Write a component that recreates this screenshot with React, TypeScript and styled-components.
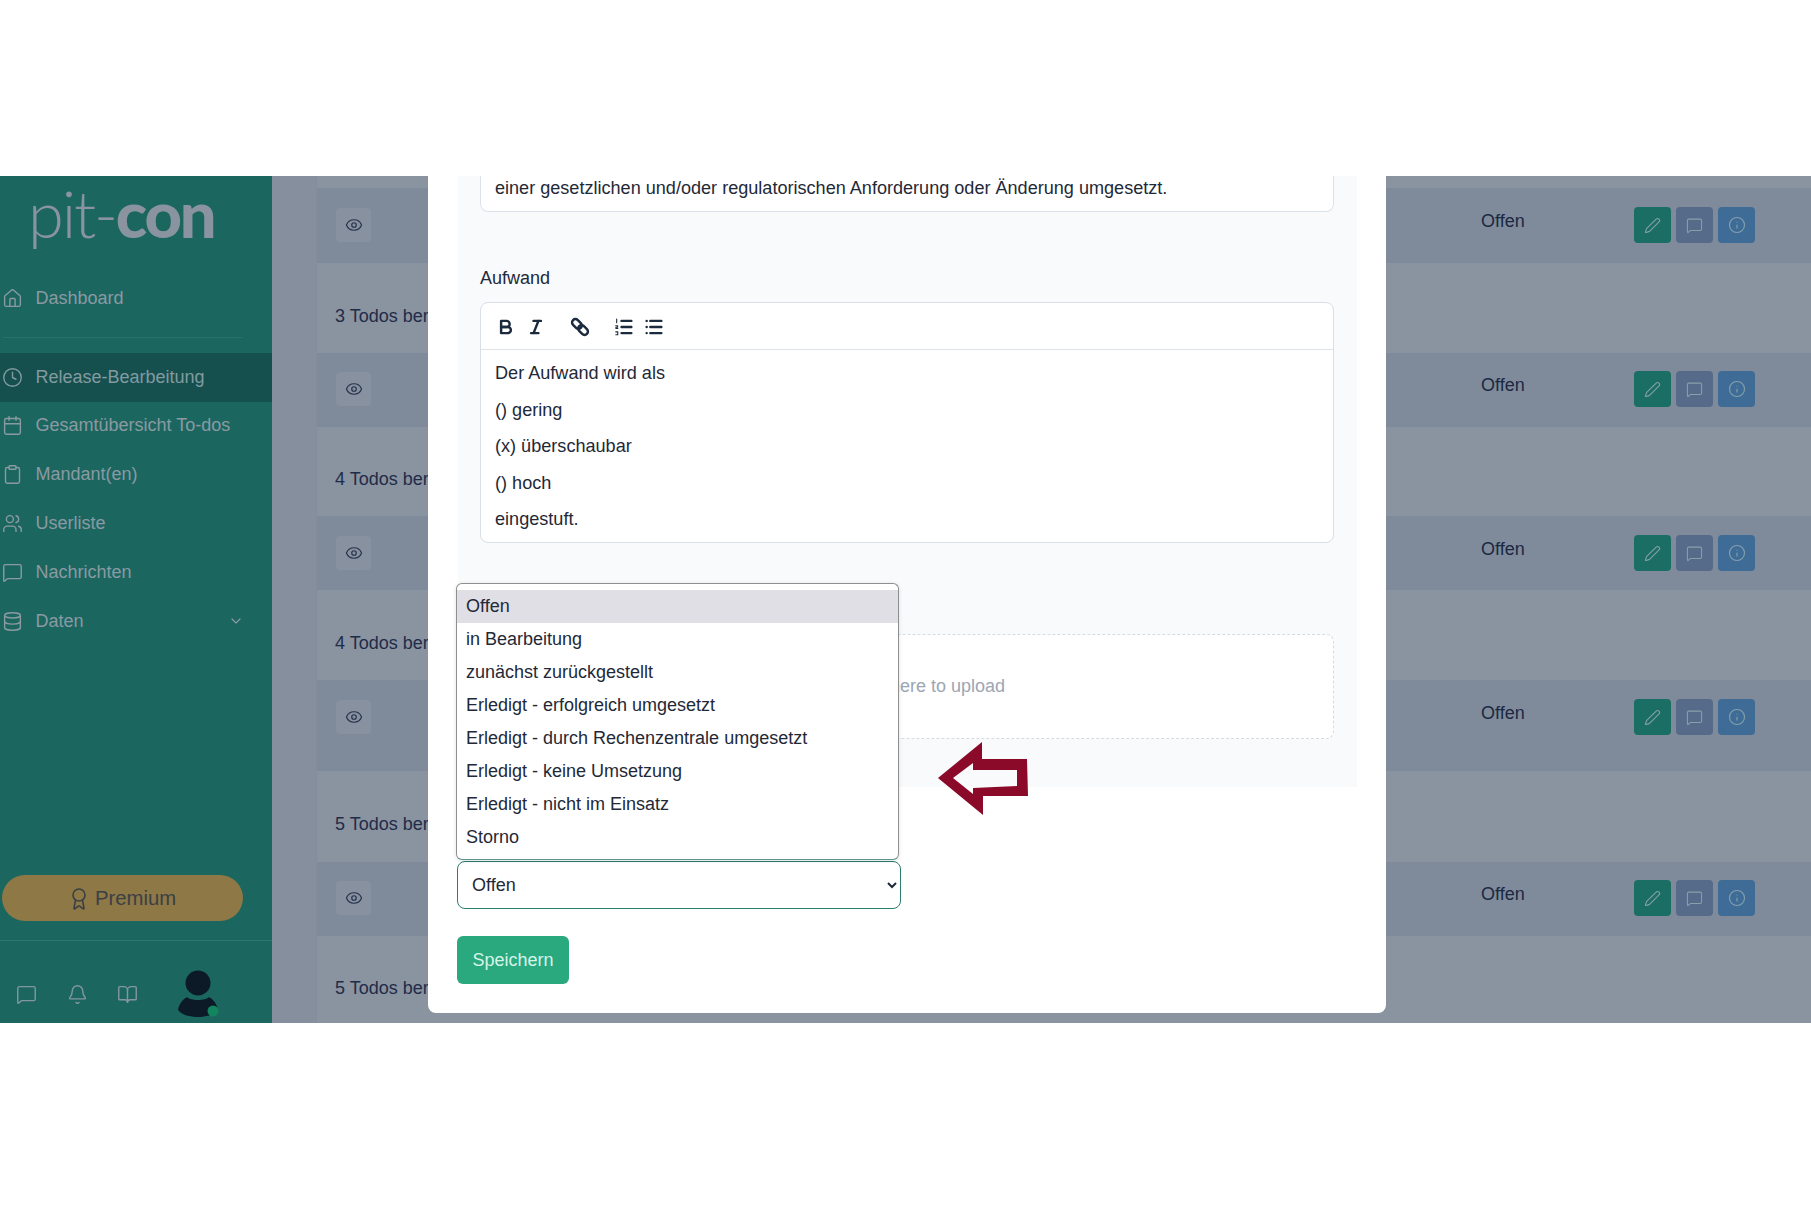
import React from "react";
import styled, { createGlobalStyle } from "styled-components";
import { House, Clock, Calendar, Clipboard, Users, MessageSquare, Database, ChevronDown, Award, Bell, BookOpen, Eye, Pen, Info } from "lucide-react";

const Global = createGlobalStyle`
  html, body { margin: 0; padding: 0; background: #fff; }
  body { font-family: "Liberation Sans", Arial, sans-serif; font-size: 18px; color: #1f2937; overflow: hidden; }
  * { box-sizing: border-box; }
`;

const Page = styled.div`
  height: 1207px;
  padding-top: 176px;
`;
const Shell = styled.div`
  position: relative;
  height: 847px;
  display: flex;
  background: #868f9d;
`;
const Sidebar = styled.aside`
  width: 272px;
  flex: none;
  background: #1c6660;
  display: flex;
  flex-direction: column;
  color: #8a9aa2;
`;
const Logo = styled.div`
  height: 86px;
  padding: 0 0 0 28px;
  font-family: Lato, sans-serif;
  font-size: 65px;
  line-height: 74px;
  letter-spacing: -2.2px;
  color: #8a94a1;
  font-weight: 300;
  white-space: nowrap;
  b { font-weight: 900; }
`;
const NavItem = styled.div<{ $active?: boolean; $first?: boolean }>`
  height: 48.8px;
  margin-top: ${(p) => (p.$first ? 12 : 0)}px;
  display: flex;
  align-items: center;
  gap: 13px;
  padding: 0 28px 0 1.5px;
  background: ${(p) => (p.$active ? "#15504f" : "transparent")};
  color: ${(p) => (p.$active ? "#829aa0" : "#8a9aa2")};
  svg { flex: none; }
`;
const NavLabel = styled.span`
  flex: 1;
`;
const NavDivider = styled.div`
  height: 1px;
  margin: 14px 29px 15px 3px;
  background: #2a716c;
`;
const Spacer = styled.div`
  flex: 1;
`;
const PremiumBtn = styled.div`
  height: 46px;
  margin: 0 29px 19px 2px;
  padding: 1px 2px 0 0;
  border-radius: 23px;
  background: #8e7845;
  color: #3a4045;
  display: flex;
  align-items: center;
  justify-content: center;
  gap: 4px;
  font-size: 20.3px;
`;
const SideFooter = styled.div`
  height: 83px;
  border-top: 1px solid #2f7570;
  display: flex;
  align-items: flex-start;
  padding: 43px 0 0 16px;
  gap: 29.5px;
  color: #83979f;
`;
const FootIcon = styled.span`
  display: flex;
  width: 21px;
  height: 21px;
`;
const AvatarWrap = styled.div`
  margin: -14px 0 0 8px;
  width: 44px;
  height: 56px;
`;
const Main = styled.main`
  flex: 1;
  padding-left: 44px;
  min-width: 0;
`;
const Table = styled.div`
  border-left: 1px solid #838d9b;
  height: 100%;
  background: #8a93a0;
  padding-top: 12px;
`;
const DarkRow = styled.div<{ $h: number; $pt: number }>`
  height: ${(p) => p.$h}px;
  background: #7f8b9b;
  display: flex;
  align-items: flex-start;
  padding: ${(p) => p.$pt}px 56px 0 19px;
  color: #1b2842;
`;
const LightRow = styled.div<{ $h: number; $pt: number }>`
  height: ${(p) => p.$h}px;
  padding: ${(p) => p.$pt}px 0 0 18px;
  color: #1f2c48;
  line-height: 24px;
`;
const EyeBtn = styled.div`
  width: 35px;
  height: 34px;
  border-radius: 4px;
  background: #87919f;
  display: flex;
  align-items: center;
  justify-content: center;
  color: #27324d;
`;
const RowGap = styled.div`
  flex: 1;
`;
const Status = styled.div`
  width: 153px;
  line-height: 24px;
  margin-top: 1px;
`;
const Actions = styled.div`
  display: flex;
  gap: 5px;
  margin-top: -1px;
`;
const ActionBtn = styled.div<{ $bg: string }>`
  width: 37px;
  height: 36px;
  border-radius: 4px;
  background: ${(p) => p.$bg};
  color: #86a0ac;
  display: flex;
  align-items: center;
  justify-content: center;
`;
const Modal = styled.div`
  position: absolute;
  top: 0;
  left: 428px;
  width: 958px;
  height: 837px;
  background: #fff;
  border-radius: 0 0 8px 8px;
`;
const Panel = styled.div`
  margin: 0 29px 0 30px;
  padding: 0 23px 50px 22px;
  background: #f8fafc;
  height: 611px;
`;
const BoxTop = styled.div`
  height: 36px;
  background: #fff;
  border: 1px solid #dde2e9;
  border-top: 0;
  border-radius: 0 0 8px 8px;
  padding: 0 14px;
  line-height: 24px;
  font-size: 18.08px;
`;
const FieldLabel = styled.div`
  margin: 54px 0 12px;
  line-height: 24px;
  color: #1f2937;
`;
const Editor = styled.div`
  height: 241px;
  background: #fff;
  border: 1px solid #d9dfe6;
  border-radius: 8px;
`;
const Toolbar = styled.div`
  height: 47px;
  border-bottom: 1px solid #dde2e9;
  display: flex;
  align-items: center;
  padding: 2px 0 0 14px;
`;
const ToolIcon = styled.svg<{ $mr: number }>`
  width: 22px;
  height: 22px;
  margin-right: ${(p) => p.$mr}px;
  fill: none;
  stroke: #1b2a3d;
  stroke-width: 2;
  stroke-linecap: round;
  stroke-linejoin: round;
  flex: none;
`;
const EditorBody = styled.div`
  padding: 11px 14px 0;
  font-size: 18.1px;
  p { margin: 0 0 12.5px; line-height: 24px; }
`;
const Upload = styled.div`
  margin-top: 91px;
  height: 105px;
  background: #fff;
  border: 1px dashed #d5dbe3;
  border-radius: 8px;
  display: flex;
  align-items: center;
  justify-content: center;
  color: #9ca6b4;
`;
const StatusSelect = styled.select`
  display: block;
  margin: 74px 0 0 29px;
  width: 444px;
  height: 48px;
  padding: 0 0 0 10px;
  background: #fff;
  border: 1px solid #2a7d6f;
  border-radius: 8px;
  font: inherit;
  color: #1f2937;
  outline: none;
`;
const SaveBtn = styled.button`
  display: block;
  margin: 27px 0 0 29px;
  width: 112px;
  height: 48px;
  border: 0;
  border-radius: 6px;
  background: #2aa87e;
  color: #d6f5e8;
  font: inherit;
  padding: 0;
`;
const Popup = styled.div`
  position: absolute;
  top: 407px;
  left: 28px;
  width: 443px;
  height: 277px;
  padding-top: 6px;
  background: #fff;
  border: 1px solid #8f8f8f;
  border-bottom-color: #5e9488;
  border-radius: 6px;
  box-shadow: 0 1px 4px rgba(0, 0, 0, 0.12);
`;
const Option = styled.div<{ $sel?: boolean }>`
  height: 33px;
  line-height: 33px;
  padding-left: 9px;
  background: ${(p) => (p.$sel ? "#dfdfe5" : "transparent")};
  color: #1f2937;
`;
const ArrowMark = styled.svg`
  position: absolute;
  left: 508px;
  top: 561px;
  width: 94px;
  height: 78px;
`;

const rows: { kind: "d" | "l"; h: number; pt: number; t?: string }[] = [
  { kind: "d", h: 75, pt: 20 },
  { kind: "l", h: 90, pt: 41, t: "3 Todos bereits bearbeitet" },
  { kind: "d", h: 74, pt: 19 },
  { kind: "l", h: 89, pt: 40, t: "4 Todos bereits bearbeitet" },
  { kind: "d", h: 74, pt: 20 },
  { kind: "l", h: 90, pt: 41, t: "4 Todos bereits bearbeitet" },
  { kind: "d", h: 91, pt: 20 },
  { kind: "l", h: 91, pt: 41, t: "5 Todos bereits bearbeitet" },
  { kind: "d", h: 74, pt: 19 },
  { kind: "l", h: 87, pt: 40, t: "5 Todos bereits bearbeitet" },
];

const options = [
  "Offen",
  "in Bearbeitung",
  "zunächst zurückgestellt",
  "Erledigt - erfolgreich umgesetzt",
  "Erledigt - durch Rechenzentrale umgesetzt",
  "Erledigt - keine Umsetzung",
  "Erledigt - nicht im Einsatz",
  "Storno",
];

const nav = [
  { icon: Clock, label: "Release-Bearbeitung", active: true },
  { icon: Calendar, label: "Gesamtübersicht To-dos" },
  { icon: Clipboard, label: "Mandant(en)" },
  { icon: Users, label: "Userliste" },
  { icon: MessageSquare, label: "Nachrichten" },
  { icon: Database, label: "Daten", more: true },
];

export default function App() {
  return (
    <Page>
      <Global />
      <Shell>
        <Sidebar>
          <Logo>
            pit-<b>con</b>
          </Logo>
          <NavItem $first>
            <House size={21} strokeWidth={1.6} />
            <NavLabel>Dashboard</NavLabel>
          </NavItem>
          <NavDivider />
          {nav.map((n) => (
            <NavItem key={n.label} $active={n.active}>
              <n.icon size={21} strokeWidth={1.6} />
              <NavLabel>{n.label}</NavLabel>
              {n.more && <ChevronDown size={16} strokeWidth={1.8} />}
            </NavItem>
          ))}
          <Spacer />
          <PremiumBtn>
            <Award size={24} strokeWidth={1.6} />
            Premium
          </PremiumBtn>
          <SideFooter>
            <FootIcon>
              <MessageSquare size={21} strokeWidth={1.6} />
            </FootIcon>
            <FootIcon>
              <Bell size={21} strokeWidth={1.6} />
            </FootIcon>
            <FootIcon>
              <BookOpen size={21} strokeWidth={1.6} />
            </FootIcon>
            <AvatarWrap>
              <svg width="44" height="56" viewBox="0 0 44 56">
                <circle cx="22" cy="13" r="12.5" fill="#0c1a28" />
                <path d="M11 27c3 4 19 4 22 0 4 2 8 7 9 13-5 5-12 7-20 7S6 45 2 40c1-6 5-11 9-13z" fill="#0c1a28" />
                <circle cx="37" cy="41" r="5.5" fill="#12855f" />
              </svg>
            </AvatarWrap>
          </SideFooter>
        </Sidebar>
        <Main>
          <Table>
            {rows.map((r, i) =>
              r.kind === "d" ? (
                <DarkRow key={i} $h={r.h} $pt={r.pt}>
                  <EyeBtn>
                    <Eye size={18} strokeWidth={1.6} />
                  </EyeBtn>
                  <RowGap />
                  <Status>Offen</Status>
                  <Actions>
                    <ActionBtn $bg="#1b6e63">
                      <Pen size={17} strokeWidth={1.5} />
                    </ActionBtn>
                    <ActionBtn $bg="#566b89">
                      <MessageSquare size={17} strokeWidth={1.5} />
                    </ActionBtn>
                    <ActionBtn $bg="#3e6c96">
                      <Info size={18} strokeWidth={1.5} />
                    </ActionBtn>
                  </Actions>
                </DarkRow>
              ) : (
                <LightRow key={i} $h={r.h} $pt={r.pt}>
                  {r.t}
                </LightRow>
              )
            )}
          </Table>
        </Main>
        <Modal>
          <Panel>
            <BoxTop>einer gesetzlichen und/oder regulatorischen Anforderung oder Änderung umgesetzt.</BoxTop>
            <FieldLabel>Aufwand</FieldLabel>
            <Editor>
              <Toolbar>
                <ToolIcon viewBox="0 0 18 18" $mr={8}>
                  <path d="M5 4h4.5a2.5 2.5 0 0 1 0 5H5z" />
                  <path d="M5 9h5.5a2.5 2.5 0 0 1 0 5H5z" />
                </ToolIcon>
                <ToolIcon viewBox="0 0 18 18" $mr={22}>
                  <path d="M7 4h6M5 14h6M11 4 7 14" />
                </ToolIcon>
                <ToolIcon viewBox="0 0 18 18" $mr={22}>
                  <rect x="2" y="3.75" width="9" height="5.5" rx="2.75" transform="rotate(45 6.5 6.5)" />
                  <rect x="7" y="8.75" width="9" height="5.5" rx="2.75" transform="rotate(45 11.5 11.5)" />
                </ToolIcon>
                <ToolIcon viewBox="0 0 18 18" $mr={8}>
                  <path d="M7 4h8M7 9h8M7 14h8" />
                  <path d="M3 2.5v3M2.2 8h1.6v1.2H2.4v1H4M2.3 13h1.6v2.4H2.3" strokeWidth="0.9" />
                </ToolIcon>
                <ToolIcon viewBox="0 0 18 18" $mr={0}>
                  <path d="M6 4h9M6 9h9M6 14h9M3 4h.01M3 9h.01M3 14h.01" />
                </ToolIcon>
              </Toolbar>
              <EditorBody>
                <p>Der Aufwand wird als</p>
                <p>() gering</p>
                <p>(x) überschaubar</p>
                <p>() hoch</p>
                <p>eingestuft.</p>
              </EditorBody>
            </Editor>
            <Upload>Drop files here to upload</Upload>
          </Panel>
          <StatusSelect defaultValue="Offen">
            {options.map((o) => (
              <option key={o}>{o}</option>
            ))}
          </StatusSelect>
          <SaveBtn>Speichern</SaveBtn>
          <Popup>
            {options.map((o, i) => (
              <Option key={o} $sel={i === 0}>
                {o}
              </Option>
            ))}
          </Popup>
          <ArrowMark viewBox="0 0 94 78">
            <path
              fillRule="evenodd"
              fill="#8b0a2a"
              d="M2 41 46 5v17h45l1 37H47v19zM17 41l20 16v-6l44-2V33H37v-7z"
            />
          </ArrowMark>
        </Modal>
      </Shell>
    </Page>
  );
}
